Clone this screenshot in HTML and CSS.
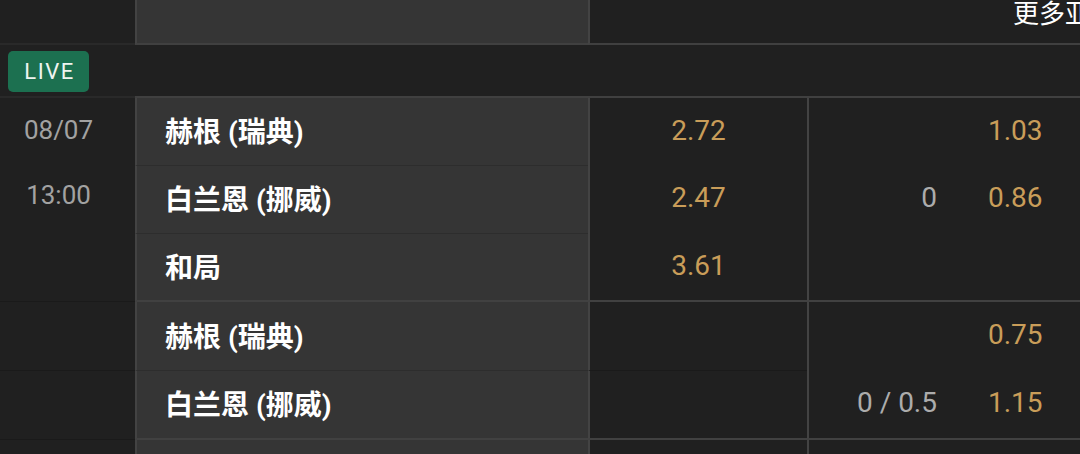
FILE: index.html
```html
<!DOCTYPE html>
<html lang="zh">
<head>
<meta charset="utf-8">
<title>Odds</title>
<link rel="stylesheet" href="styles.css">
</head>
<body>
<div class="page">
  <div class="row top">
    <div class="c-date"></div>
    <div class="c-team"></div>
    <div class="c-odds"></div>
    <div class="c-more"><span class="more-link">更多亚洲盘口</span></div>
  </div>
  <div class="live-row">
    <span class="live">LIVE</span>
  </div>

  <div class="block">
    <div class="row r67">
      <div class="c-date">08/07</div>
      <div class="c-team">赫根 (瑞典)</div>
      <div class="c-odds"><span class="odd">2.72</span></div>
      <div class="c-more"><span class="hcp"></span><span class="odd">1.03</span></div>
    </div>
    <div class="row">
      <div class="c-date time">13:00</div>
      <div class="c-team sep">白兰恩 (挪威)</div>
      <div class="c-odds"><span class="odd">2.47</span></div>
      <div class="c-more"><span class="hcp">0</span><span class="odd">0.86</span></div>
    </div>
    <div class="row r67">
      <div class="c-date"></div>
      <div class="c-team sep">和局</div>
      <div class="c-odds"><span class="odd">3.61</span></div>
      <div class="c-more"></div>
    </div>
  </div>

  <div class="block">
    <div class="row">
      <div class="c-date"></div>
      <div class="c-team">赫根 (瑞典)</div>
      <div class="c-odds"></div>
      <div class="c-more"><span class="hcp"></span><span class="odd">0.75</span></div>
    </div>
    <div class="row">
      <div class="c-date sep-dark"></div>
      <div class="c-team sep">白兰恩 (挪威)</div>
      <div class="c-odds sep-dark"></div>
      <div class="c-more"><span class="hcp">0 / 0.5</span><span class="odd">1.15</span></div>
    </div>
  </div>

  <div class="block">
    <div class="row">
      <div class="c-date"></div>
      <div class="c-team"></div>
      <div class="c-odds"></div>
      <div class="c-more"></div>
    </div>
  </div>
</div>
</body>
</html>
```

FILE: styles.css
```css
* { box-sizing: border-box; }

html, body {
  margin: 0;
  padding: 0;
  background: #202020;
  overflow: hidden;
}

body {
  width: 1080px;
  height: 454px;
  font-family: Roboto, "Noto Sans CJK SC", sans-serif;
  color: #ffffff;
}

.page {
  width: 1080px;
}

.row {
  display: grid;
  grid-template-columns: 135px 453px 219px 273px;
  height: 68px;
}

.row.r67 { height: 67px; }

.row > div {
  padding-bottom: 3px;
}

/* header strip */
.row.top {
  height: 45px;
}

.top > div {
  padding-bottom: 0;
  border-bottom: 2px solid #404040;
}

.top > .c-date {
  border-bottom-color: #292929;
}

.top > .c-more {
  border-left: 0;
  align-items: flex-start;
}

.c-date {
  display: flex;
  align-items: center;
  justify-content: center;
  padding-right: 18px;
  font-size: 26px;
  color: #a2a2a2;
}

.row > .c-date.time {
  padding-bottom: 9px;
}

.c-team {
  display: flex;
  align-items: center;
  padding-left: 28px;
  background: #353535;
  border-left: 2px solid #434343;
  font-family: Roboto, "Noto Sans CJK SC", sans-serif;
  font-weight: 700;
  font-size: 28px;
  color: #ffffff;
}

.c-odds {
  display: flex;
  align-items: center;
  justify-content: center;
  border-left: 2px solid #434343;
}

.c-more {
  display: flex;
  align-items: center;
  border-left: 2px solid #434343;
  overflow: hidden;
  white-space: nowrap;
}

.more-link {
  margin-left: 206px;
  margin-top: -2px;
  font-family: "Noto Sans CJK SC", sans-serif;
  font-size: 26px;
  line-height: 28px;
  color: #ffffff;
}

.sep { border-top: 1px solid #2d2d2d; }
.sep-dark { border-top: 1px solid #1a1a1a; }

.odd {
  font-size: 28px;
  color: #c99d59;
}

.hcp {
  width: 128px;
  text-align: right;
  font-size: 28px;
  color: #acacac;
  margin-right: 51px;
}

/* LIVE strip */
.live-row {
  height: 53px;
  padding: 6px 0 0 8px;
  background:
    linear-gradient(to right, #292929 135px, #404040 135px) left bottom / 100% 2px no-repeat,
    #202020;
}

.live {
  display: inline-flex;
  align-items: center;
  justify-content: center;
  width: 81px;
  height: 41px;
  border-radius: 5px;
  background: #1c7050;
  color: #eef4f0;
  font-size: 22px;
  letter-spacing: 1.5px;
  padding-left: 2px;
}

/* match blocks: closing rule under the last row */
.block .row:last-child { height: 70px; }
.block .row.r67:last-child { height: 69px; }

.block .row:last-child > div {
  border-bottom: 2px solid #414141;
}

.block .row:last-child > .c-date {
  border-bottom: 1px solid #1a1a1a;
}

.block:last-child .row:last-child > div {
  border-bottom: 0;
}
```
